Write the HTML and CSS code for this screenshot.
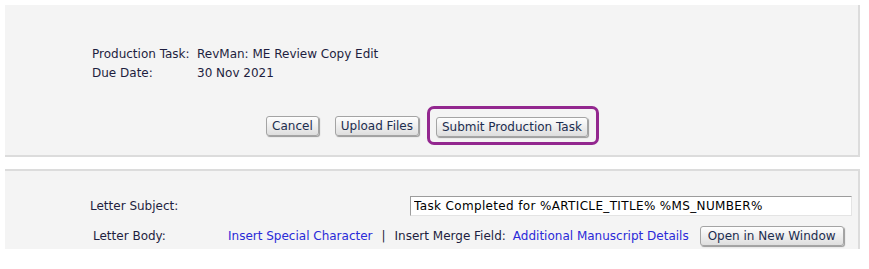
FILE: index.html
```html
<!DOCTYPE html>
<html lang="en">
<head>
    <meta charset="UTF-8">
    <title>Submit Production Task</title>
    <link rel="stylesheet" href="styles.css">
</head>
<body>
    <!-- Task summary -->
    <section class="panel task-panel">
        <div class="task-info">
            <span class="label">Production Task:</span>
            <span class="value">RevMan: ME Review Copy Edit</span>
            <span class="label">Due Date:</span>
            <span class="value">30 Nov 2021</span>
        </div>
        <div class="task-actions">
            <button class="btn btn-cancel">Cancel</button>
            <button class="btn btn-upload">Upload Files</button>
            <div class="highlight">
                <button class="btn">Submit Production Task</button>
            </div>
        </div>
    </section>

    <!-- Letter -->
    <section class="panel letter-panel">
        <div class="letter-row subject-row">
            <span class="letter-label">Letter Subject:</span>
            <input class="subject-input" type="text" value="Task Completed for %ARTICLE_TITLE% %MS_NUMBER%">
        </div>
        <div class="letter-row body-row">
            <span class="letter-label body-label">Letter Body:</span>
            <div class="body-tools">
                <a href="#">Insert Special Character</a>
                <span class="sep">|</span>
                <span>Insert Merge Field:</span>
                <a href="#">Additional Manuscript Details</a>
                <button class="btn btn-window">Open in New Window</button>
            </div>
        </div>
    </section>
</body>
</html>
```

FILE: styles.css
```css
body {
    margin: 0;
    padding: 5px 0 0 5px;
    background: #ffffff;
    font-family: "DejaVu Sans", Verdana, sans-serif;
    font-size: 12px;
    color: #1e1e40;
}

.panel {
    width: 853px;
    background: #f4f4f4;
    border-right: 2px solid #dcdcdc;
}

.task-panel {
    height: 150px;
    border-bottom: 2px solid #dcdcdc;
    box-sizing: content-box;
}

.task-info {
    display: grid;
    grid-template-columns: 105px auto;
    line-height: 19px;
    padding: 40px 0 0 87px;
}

.task-actions {
    display: flex;
    justify-content: center;
    align-items: center;
    margin-top: 23px;
    padding-left: 2px;
}

.btn {
    font-family: "DejaVu Sans", Verdana, sans-serif;
    font-size: 12px;
    color: #1c2d4f;
    height: 20px;
    padding: 0 5px;
    border: 1px solid #a4a4a4;
    border-radius: 3px;
    background: linear-gradient(#fefefe, #dedede);
    box-shadow: 1px 1px 1px #9a9a9a;
    cursor: pointer;
}

.btn-cancel {
    margin-right: 16px;
}

.btn-upload {
    margin-right: 8px;
}

.highlight {
    border: 3px solid #93278f;
    border-radius: 7px;
    padding: 8px 8px 5px 6px;
}

.letter-panel {
    margin-top: 12px;
    height: 78px;
    border-top: 2px solid #dcdcdc;
}

.letter-row {
    display: flex;
    align-items: center;
}

.subject-row {
    padding-top: 25px;
}

.letter-label {
    width: 405px;
    padding-left: 85px;
    box-sizing: border-box;
}

.body-label {
    width: 223px;
    padding-left: 88px;
}

.subject-input {
    width: 442px;
    height: 20px;
    box-sizing: border-box;
    margin: 0;
    padding: 0 3px;
    font-family: "DejaVu Sans", Verdana, sans-serif;
    font-size: 12px;
    letter-spacing: 0.35px;
    color: #000000;
    background: #ffffff;
    border: 1px solid #e4e4e4;
    border-top-color: #9c9c9c;
    border-left-color: #9c9c9c;
}

.body-row {
    margin-top: 10px;
}

.body-tools {
    display: flex;
    align-items: center;
    gap: 7px;
}

.body-tools a {
    color: #2a2ad8;
    text-decoration: none;
}

.sep {
    margin: 0 2px;
}

.btn-window {
    margin-left: 4px;
    padding: 0 7px;
}
```
